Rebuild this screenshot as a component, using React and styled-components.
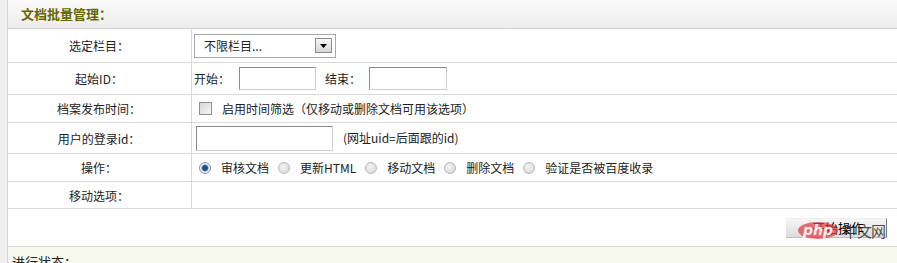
import styled, { createGlobalStyle } from "styled-components";

const GlobalStyle = createGlobalStyle`
    body {
        margin: 0;
        background: #ffffff;
        font-family: "Noto Sans CJK SC", "DejaVu Sans", sans-serif;
        font-size: 12px;
        color: #222;
    }
`;

const operations = ["审核文档", "更新HTML", "移动文档", "删除文档", "验证是否被百度收录"];

const App = () => {
    return (
        <>
        <GlobalStyle />
        <Page>
            <Stripe />
            <Panel>
                <Header>
                    <Title>文档批量管理：</Title>
                </Header>

                <Row $height={33}>
                    <Label>选定栏目：</Label>
                    <Cell>
                        <Select>
                            <span>不限栏目...</span>
                            <ArrowButton>
                                <svg width="7" height="4" viewBox="0 0 7 4">
                                    <polygon points="0,0 7,0 3.5,4" fill="#000" />
                                </svg>
                            </ArrowButton>
                        </Select>
                    </Cell>
                </Row>

                <Row $height={31}>
                    <Label>起始ID：</Label>
                    <Cell>
                        <Text>开始：</Text>
                        <Input $width={77} $gap={9} />
                        <Text style={{ marginLeft: 9 }}>结束：</Text>
                        <Input $width={78} $gap={8} />
                    </Cell>
                </Row>

                <Row $height={27}>
                    <Label>档案发布时间：</Label>
                    <Cell>
                        <Checkbox />
                        <Text>启用时间筛选（仅移动或删除文档可用该选项）</Text>
                    </Cell>
                </Row>

                <Row $height={30}>
                    <Label>用户的登录id：</Label>
                    <Cell>
                        <Input $width={137} $height={25} $gap={2} />
                        <Text style={{ marginLeft: 10 }}>(网址uid=后面跟的id)</Text>
                    </Cell>
                </Row>

                <Row $height={27}>
                    <Label>操作：</Label>
                    <Cell>
                        {operations.map((op, i) => (
                            <Option key={op}>
                                <Radio $checked={i === 0} />
                                <Text>{op}</Text>
                            </Option>
                        ))}
                    </Cell>
                </Row>

                <Row $height={26}>
                    <Label>移动选项：</Label>
                    <Cell />
                </Row>

                <ButtonRow>
                    <SubmitButton>
                        开始操作
                        <Watermark>
                            <PhpBadge>php</PhpBadge>
                            <WatermarkText>中文网</WatermarkText>
                        </Watermark>
                    </SubmitButton>
                </ButtonRow>

                <Footer>进行状态：</Footer>
            </Panel>
        </Page>
        </>
    );
};

const Page = styled.div`
    display: flex;
    width: 897px;
    height: 263px;
    overflow: hidden;
`;

const Stripe = styled.div`
    width: 7px;
    flex-shrink: 0;
    background: #efefef;
`;

const Panel = styled.div`
    flex: 1;
    display: flex;
    flex-direction: column;
    border-left: 1px solid #d4d4d4;
`;

const Header = styled.div`
    height: 28px;
    flex-shrink: 0;
    display: flex;
    align-items: center;
    padding-left: 13px;
    background: linear-gradient(#fbfbfb, #ececec);
    border-bottom: 1px solid #cfcfcf;
`;

const Title = styled.div`
    font-size: 13px;
    font-weight: bold;
    color: #666600;
    padding-bottom: 2px;
`;

const Row = styled.div`
    display: grid;
    grid-template-columns: 184px 1fr;
    height: ${(p) => p.$height}px;
    flex-shrink: 0;
    border-bottom: 1px solid #dadada;
`;

const Label = styled.div`
    display: flex;
    align-items: center;
    justify-content: center;
    border-right: 1px solid #dadada;
    padding-right: 1px;
`;

const Cell = styled.div`
    display: flex;
    align-items: center;
    padding-left: 2px;
`;

const Text = styled.span`
    white-space: nowrap;
    line-height: 14px;
`;

const Select = styled.div`
    box-sizing: border-box;
    width: 142px;
    height: 24px;
    border: 1px solid #a8a8a8;
    display: flex;
    align-items: center;
    justify-content: space-between;
    padding: 0 3px 0 9px;
    color: #222;
`;

const ArrowButton = styled.div`
    width: 15px;
    height: 13px;
    border: 1px solid #8c8c8c;
    background: linear-gradient(#f8f8f8, #d6d6d6);
    display: flex;
    align-items: center;
    justify-content: center;
`;

const Input = styled.div`
    width: ${(p) => p.$width}px;
    height: ${(p) => p.$height || 23}px;
    margin-left: ${(p) => p.$gap || 0}px;
    box-sizing: border-box;
    border: 1px solid #cfcfcf;
    border-top-color: #8a8a8a;
    border-left-color: #8a8a8a;
    background: #fff;
`;

const Checkbox = styled.span`
    width: 11px;
    height: 11px;
    margin: 0 10px 0 5px;
    border: 1px solid #8f8f8f;
    background: linear-gradient(135deg, #d6d6d6, #f6f6f6);
    flex-shrink: 0;
`;

const Option = styled.label`
    display: flex;
    align-items: center;
    margin-right: 4px;
`;

const Radio = styled.span`
    width: 10px;
    height: 10px;
    margin: 0 10px 0 5px;
    border-radius: 50%;
    flex-shrink: 0;
    border: 1px solid ${(p) => (p.$checked ? "#7b98b4" : "#b9b9b9")};
    background: ${(p) =>
        p.$checked
            ? "radial-gradient(circle, #1f4f7f 0 2.3px, #5b86b0 3px, #eef3f8 4px)"
            : "radial-gradient(circle at 40% 40%, #f4f4f4, #d2d2d2)"};
`;

const ButtonRow = styled.div`
    height: 37px;
    flex-shrink: 0;
    display: flex;
    align-items: center;
    justify-content: flex-end;
    padding-right: 10px;
    border-bottom: 1px solid #dadada;
`;

const SubmitButton = styled.div`
    position: relative;
    width: 101px;
    height: 20px;
    box-sizing: border-box;
    padding-left: 26px;
    display: flex;
    align-items: center;
    background: linear-gradient(#f6f6f6, #dcdcdc);
    border-right: 1px solid #7a7a7a;
    border-bottom: 1px solid #bdbdbd;
    border-top: 1px solid #eeeeee;
    color: #000;
    font-size: 13px;
`;

const Watermark = styled.div`
    position: absolute;
    left: 12px;
    top: 1px;
    display: flex;
    align-items: center;
    gap: 5px;
`;

const PhpBadge = styled.span`
    width: 40px;
    height: 17px;
    border-radius: 50%;
    background: rgba(226, 60, 66, 0.72);
    color: rgba(255, 255, 255, 0.9);
    font-family: "DejaVu Sans", sans-serif;
    font-style: italic;
    font-weight: bold;
    font-size: 14px;
    line-height: 16px;
    text-align: center;
`;

const WatermarkText = styled.span`
    font-size: 15px;
    color: rgba(30, 30, 30, 0.8);
    letter-spacing: -1px;
`;

const Footer = styled.div`
    flex: 1;
    background: #f7f9ee;
    padding: 5px 0 0 4px;
    font-size: 13px;
`;

export default App;
